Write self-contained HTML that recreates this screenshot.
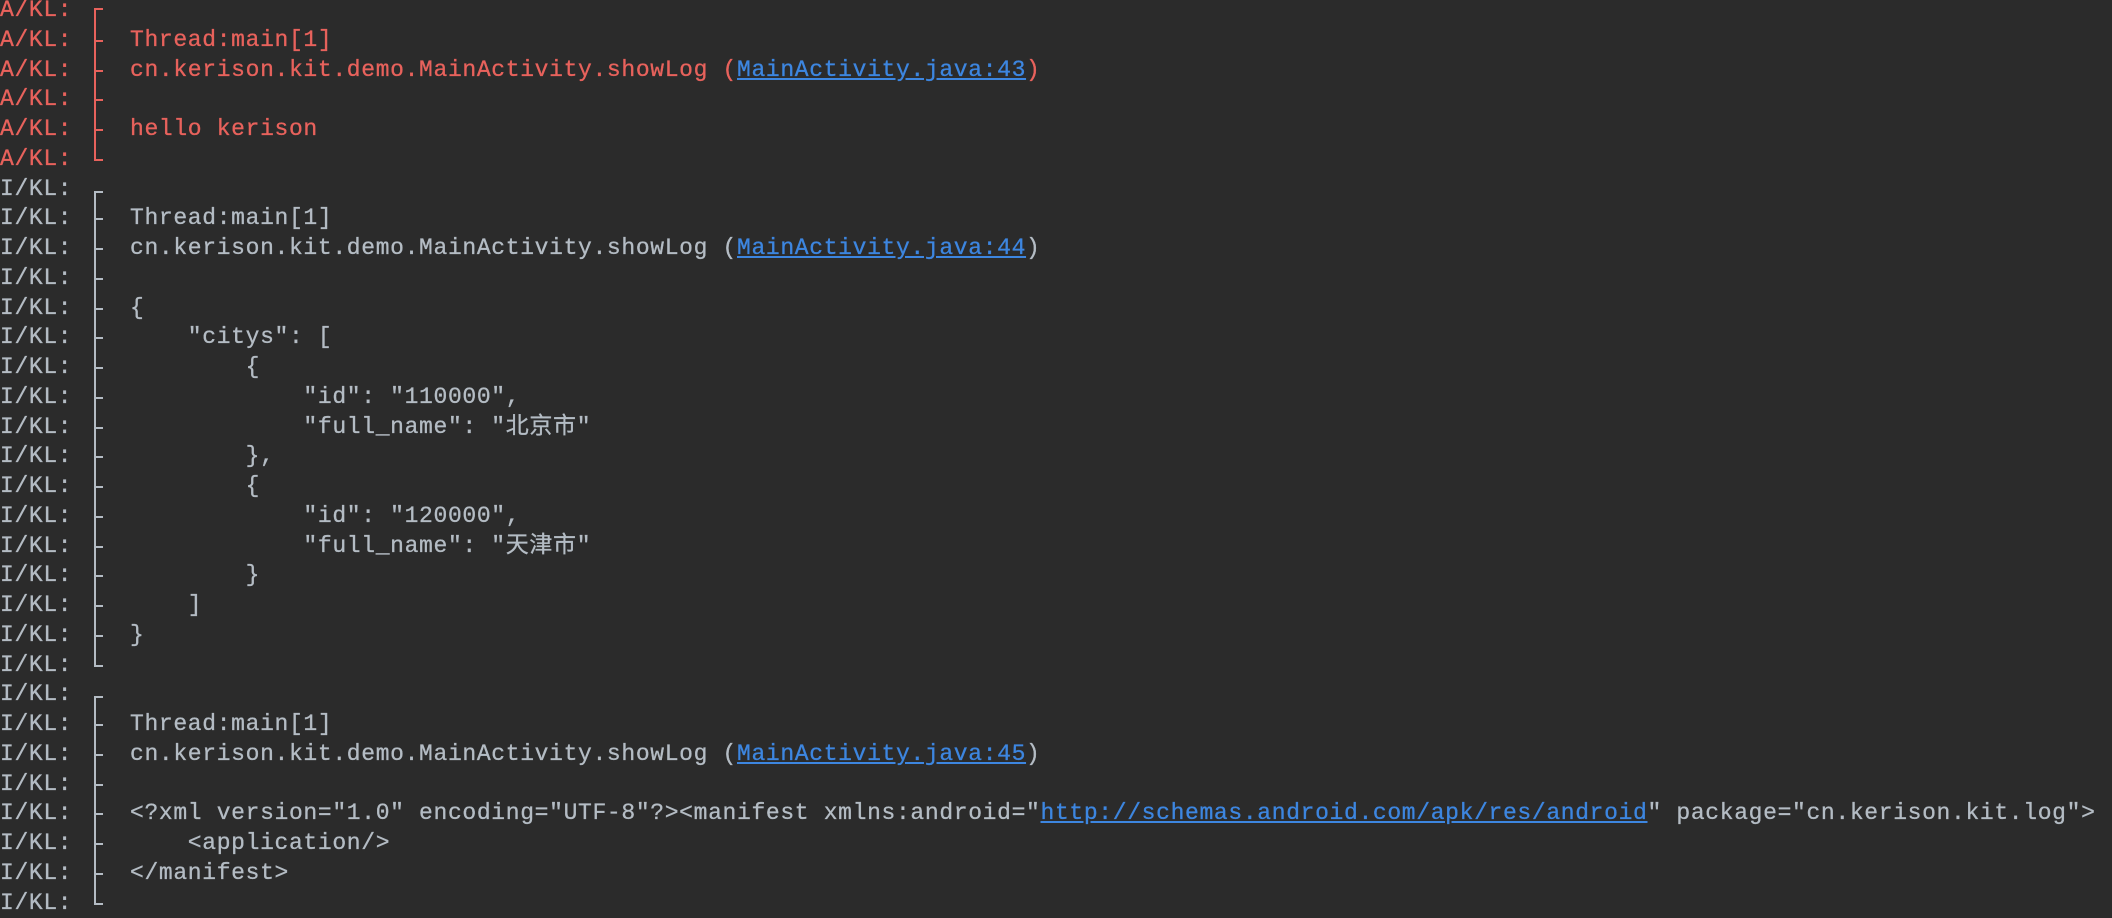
<!DOCTYPE html>
<html><head><meta charset="utf-8"><style>
html,body{margin:0;padding:0;background:#2b2b2b;width:2112px;height:916px;overflow:hidden}
.l{position:absolute;left:0;height:30px;line-height:30px;font-family:"Liberation Mono","Noto Sans CJK SC",monospace;font-size:23px;letter-spacing:0.65px;white-space:pre;color:#b4bcc4;-webkit-text-stroke:0.3px currentColor}
.r{color:#e8625c}
.t{position:absolute;left:130px}
.b{position:absolute;left:94px;width:2px;background:currentColor}
.k{position:absolute;left:94px;width:9px;height:2px;background:currentColor}
a{color:#3d86e0;text-decoration:underline}
</style></head><body>
<div class="l r" style="top:-5px">A/KL:<span class="b" style="top:13px;height:17px"></span><span class="k" style="top:13px"></span></div>
<div class="l r" style="top:24.75px">A/KL:<span class="b" style="top:0;height:30px"></span><span class="k" style="top:15px"></span><span class="t">Thread:main[1]</span></div>
<div class="l r" style="top:54.5px">A/KL:<span class="b" style="top:0;height:30px"></span><span class="k" style="top:15px"></span><span class="t">cn.kerison.kit.demo.MainActivity.showLog (<a>MainActivity.java:43</a>)</span></div>
<div class="l r" style="top:84.25px">A/KL:<span class="b" style="top:0;height:30px"></span><span class="k" style="top:15px"></span></div>
<div class="l r" style="top:114px">A/KL:<span class="b" style="top:0;height:30px"></span><span class="k" style="top:15px"></span><span class="t">hello kerison</span></div>
<div class="l r" style="top:143.75px">A/KL:<span class="b" style="top:0;height:17px"></span><span class="k" style="top:15px"></span></div>

<div class="l" style="top:173.5px">I/KL:<span class="b" style="top:17px;height:13px"></span><span class="k" style="top:17px"></span></div>
<div class="l" style="top:203.25px">I/KL:<span class="b" style="top:0;height:30px"></span><span class="k" style="top:15px"></span><span class="t">Thread:main[1]</span></div>
<div class="l" style="top:233px">I/KL:<span class="b" style="top:0;height:30px"></span><span class="k" style="top:15px"></span><span class="t">cn.kerison.kit.demo.MainActivity.showLog (<a>MainActivity.java:44</a>)</span></div>
<div class="l" style="top:262.75px">I/KL:<span class="b" style="top:0;height:30px"></span><span class="k" style="top:15px"></span></div>
<div class="l" style="top:292.5px">I/KL:<span class="b" style="top:0;height:30px"></span><span class="k" style="top:15px"></span><span class="t">{</span></div>
<div class="l" style="top:322.25px">I/KL:<span class="b" style="top:0;height:30px"></span><span class="k" style="top:15px"></span><span class="t">    "citys": [</span></div>
<div class="l" style="top:352px">I/KL:<span class="b" style="top:0;height:30px"></span><span class="k" style="top:15px"></span><span class="t">        {</span></div>
<div class="l" style="top:381.75px">I/KL:<span class="b" style="top:0;height:30px"></span><span class="k" style="top:15px"></span><span class="t">            "id": "110000",</span></div>
<div class="l" style="top:411.5px">I/KL:<span class="b" style="top:0;height:30px"></span><span class="k" style="top:15px"></span><span class="t">            "full_name": "北京市"</span></div>
<div class="l" style="top:441.25px">I/KL:<span class="b" style="top:0;height:30px"></span><span class="k" style="top:15px"></span><span class="t">        },</span></div>
<div class="l" style="top:471px">I/KL:<span class="b" style="top:0;height:30px"></span><span class="k" style="top:15px"></span><span class="t">        {</span></div>
<div class="l" style="top:500.75px">I/KL:<span class="b" style="top:0;height:30px"></span><span class="k" style="top:15px"></span><span class="t">            "id": "120000",</span></div>
<div class="l" style="top:530.5px">I/KL:<span class="b" style="top:0;height:30px"></span><span class="k" style="top:15px"></span><span class="t">            "full_name": "天津市"</span></div>
<div class="l" style="top:560.25px">I/KL:<span class="b" style="top:0;height:30px"></span><span class="k" style="top:15px"></span><span class="t">        }</span></div>
<div class="l" style="top:590px">I/KL:<span class="b" style="top:0;height:30px"></span><span class="k" style="top:15px"></span><span class="t">    ]</span></div>
<div class="l" style="top:619.75px">I/KL:<span class="b" style="top:0;height:30px"></span><span class="k" style="top:15px"></span><span class="t">}</span></div>
<div class="l" style="top:649.5px">I/KL:<span class="b" style="top:0;height:17px"></span><span class="k" style="top:15px"></span></div>

<div class="l" style="top:679.25px">I/KL:<span class="b" style="top:17px;height:13px"></span><span class="k" style="top:17px"></span></div>
<div class="l" style="top:709px">I/KL:<span class="b" style="top:0;height:30px"></span><span class="k" style="top:15px"></span><span class="t">Thread:main[1]</span></div>
<div class="l" style="top:738.75px">I/KL:<span class="b" style="top:0;height:30px"></span><span class="k" style="top:15px"></span><span class="t">cn.kerison.kit.demo.MainActivity.showLog (<a>MainActivity.java:45</a>)</span></div>
<div class="l" style="top:768.5px">I/KL:<span class="b" style="top:0;height:30px"></span><span class="k" style="top:15px"></span></div>
<div class="l" style="top:798.25px">I/KL:<span class="b" style="top:0;height:30px"></span><span class="k" style="top:15px"></span><span class="t">&lt;?xml version="1.0" encoding="UTF-8"?&gt;&lt;manifest xmlns:android="<a>http://schemas.android.com/apk/res/android</a>" package="cn.kerison.kit.log"&gt;</span></div>
<div class="l" style="top:828px">I/KL:<span class="b" style="top:0;height:30px"></span><span class="k" style="top:15px"></span><span class="t">    &lt;application/&gt;</span></div>
<div class="l" style="top:857.75px">I/KL:<span class="b" style="top:0;height:30px"></span><span class="k" style="top:15px"></span><span class="t">&lt;/manifest&gt;</span></div>
<div class="l" style="top:887.5px">I/KL:<span class="b" style="top:0;height:17px"></span><span class="k" style="top:15px"></span></div>
</body></html>
